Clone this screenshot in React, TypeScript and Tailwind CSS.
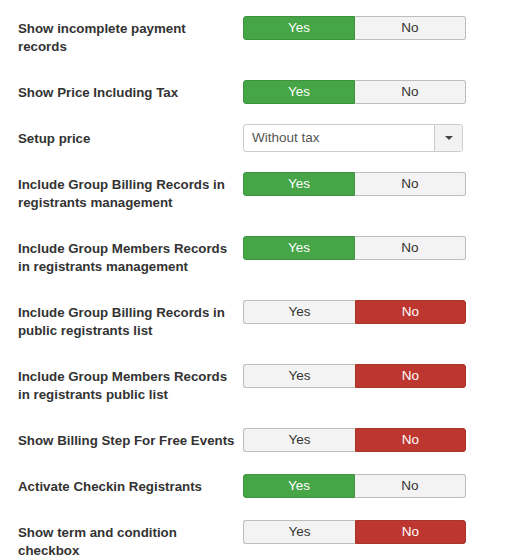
import React from 'react';

type Row =
  | { label: string[]; kind: 'toggle'; value: boolean }
  | { label: string[]; kind: 'select'; value: string };

const rows: Row[] = [
  { label: ['Show incomplete payment', 'records'], kind: 'toggle', value: true },
  { label: ['Show Price Including Tax'], kind: 'toggle', value: true },
  { label: ['Setup price'], kind: 'select', value: 'Without tax' },
  { label: ['Include Group Billing Records in', 'registrants management'], kind: 'toggle', value: true },
  { label: ['Include Group Members Records', 'in registrants management'], kind: 'toggle', value: true },
  { label: ['Include Group Billing Records in', 'public registrants list'], kind: 'toggle', value: false },
  { label: ['Include Group Members Records', 'in registrants public list'], kind: 'toggle', value: false },
  { label: ['Show Billing Step For Free Events'], kind: 'toggle', value: false },
  { label: ['Activate Checkin Registrants'], kind: 'toggle', value: true },
  { label: ['Show term and condition', 'checkbox'], kind: 'toggle', value: false },
];

function YesNo({ value }: { value: boolean }) {
  return (
    <div className="flex h-[24px] mt-[2px] text-[13.5px]">
      <div
        className={
          value
            ? 'w-[112px] flex items-center justify-center rounded-l-[3px] border border-[#3f923f] bg-[#46a546] text-white'
            : 'w-[112px] flex items-center justify-center rounded-l-[3px] border border-r-0 border-[#bdbdbd] bg-[#f3f3f3] text-[#333]'
        }
      >
        Yes
      </div>
      <div
        className={
          value
            ? 'w-[111px] flex items-center justify-center rounded-r-[3px] border border-l-0 border-[#bdbdbd] bg-[#f3f3f3] text-[#333]'
            : 'w-[111px] flex items-center justify-center rounded-r-[3px] border border-[#a8322c] bg-[#bd362f] text-white'
        }
      >
        No
      </div>
    </div>
  );
}

function Select({ value }: { value: string }) {
  return (
    <div className="flex h-[28px] w-[220px] rounded-[3px] border border-[#cccccc] bg-white text-[13.5px] text-[#555]">
      <div className="flex-1 flex items-center pl-[8px]">{value}</div>
      <div className="w-[28px] flex items-center justify-center border-l border-[#cccccc] bg-[#f2f2f2] rounded-r-[3px]">
        <svg width="8" height="4" viewBox="0 0 8 4">
          <path d="M0 0 L8 0 L4 4 Z" fill="#444" />
        </svg>
      </div>
    </div>
  );
}

export default function App() {
  return (
    <div
      className="bg-white min-h-screen pt-[14px] pl-[18px] text-[#333]"
      style={{ fontFamily: '"Liberation Sans", Arial, sans-serif' }}
    >
      {rows.map((row) => (
        <div key={row.label.join(' ')} className="flex items-start mb-[18px]">
          <div className="w-[225px] pr-[2px] pt-[6px] pb-[4px] text-[13.3px] leading-[18px] font-bold whitespace-nowrap">
            {row.label.map((line) => (
              <div key={line}>{line}</div>
            ))}
          </div>
          <div>
            {row.kind === 'toggle' ? <YesNo value={row.value} /> : <Select value={row.value} />}
          </div>
        </div>
      ))}
    </div>
  );
}
